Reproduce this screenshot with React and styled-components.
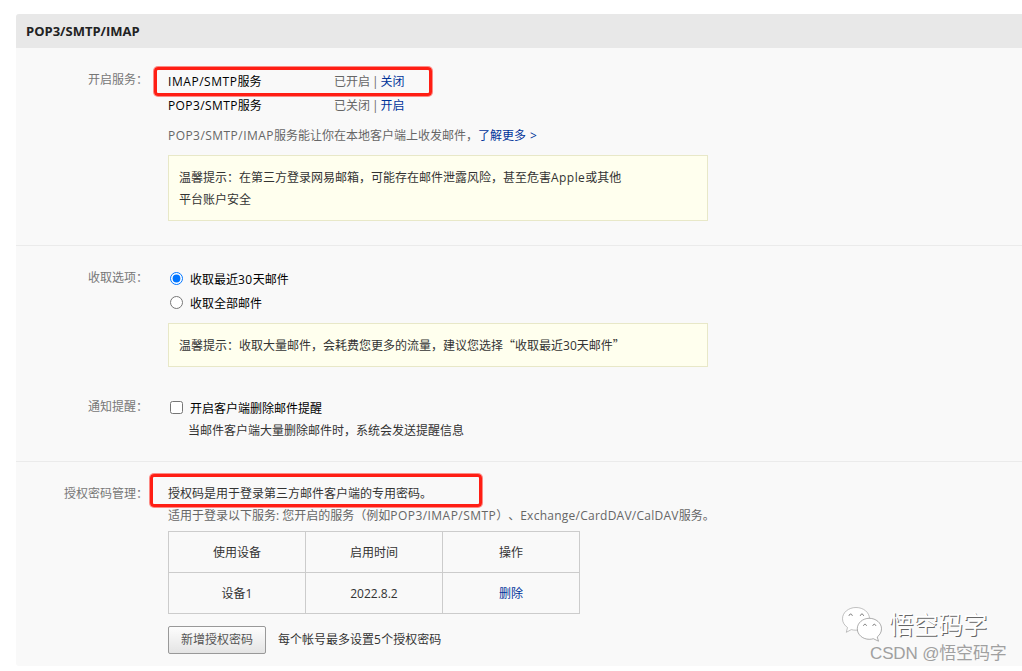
import React, { useState } from "react";
import styled, { createGlobalStyle } from "styled-components";

const GlobalStyle = createGlobalStyle`
  * {
    box-sizing: border-box;
  }
  body {
    margin: 0;
    background: #fff;
    font-family: "Open Sans", "Noto Sans CJK SC", sans-serif;
    font-size: 12px;
    color: #333;
    text-spacing-trim: space-all;
    overflow: hidden;
  }
`;

const Page = styled.div`
  position: relative;
  width: 1022px;
  height: 671px;
  padding: 14px 0 0 16px;
  overflow: hidden;
`;

const Panel = styled.div`
  height: 652px;
  background: #f9f9f9;
  border-radius: 3px 0 0 3px;
  overflow: hidden;
`;

const PanelTitle = styled.h2`
  height: 34px;
  margin: 0;
  padding-left: 10px;
  background: #e8e8e8;
  font-size: 13px;
  font-weight: 700;
  line-height: 35px;
  color: #222;
`;

const Section = styled.section`
  height: ${(p) => p.$height}px;
  padding-top: ${(p) => p.$top}px;
  border-bottom: ${(p) => (p.$last ? "none" : "1px solid #ebebeb")};
`;

const Field = styled.div`
  display: grid;
  grid-template-columns: 132px 1fr;
  column-gap: 20px;
  margin-top: ${(p) => p.$gap || 0}px;
`;

const Label = styled.div`
  text-align: right;
  line-height: ${(p) => p.$line || 22}px;
  color: #777;
`;

const Latin = styled.span`
  letter-spacing: ${(p) => p.$spacing || 0.45}px;
`;

const Cjk = styled.span`
  font-family: "Noto Sans CJK SC", sans-serif;
  line-height: 1;
`;

const ServiceRow = styled.div`
  position: relative;
  display: grid;
  grid-template-columns: 166px 1fr;
  height: 24px;
  line-height: 24px;
  color: #000;
`;

const Status = styled.span`
  color: #666;
  word-spacing: -1.2px;
`;

const Link = styled.a`
  color: #003399;
  cursor: pointer;
`;

const Line = styled.p`
  position: relative;
  margin: 0;
  padding-left: ${(p) => p.$indent || 0}px;
  line-height: 22px;
  color: ${(p) => p.$color || "#333"};
  white-space: nowrap;
`;

const Intro = styled(Line)`
  margin: 7px 0 8px;
  word-spacing: 1px;
`;

const Tip = styled.div`
  width: 540px;
  margin-top: ${(p) => p.$gap || 0}px;
  padding: 11px 80px 9px 10px;
  border: 1px solid #e8e8c8;
  background: #ffffee;
  line-height: 22px;
  color: #333;
`;

const Option = styled.label`
  display: flex;
  align-items: center;
  height: 24px;
  color: #000;

  input {
    width: 13px;
    height: 13px;
    margin: 0 7px 2px 2px;
  }
`;

const Table = styled.table`
  width: 412px;
  margin-top: 4px;
  border-collapse: collapse;
  table-layout: fixed;
  text-align: center;

  th,
  td {
    height: 41px;
    padding: 0;
    border: 1px solid #ccc;
    font-weight: 400;
  }
`;

const Actions = styled.div`
  display: flex;
  align-items: center;
  gap: 12px;
  margin-top: 12px;
`;

const Button = styled.button`
  width: 98px;
  height: 28px;
  padding: 0 0 2px;
  border: 1px solid #999;
  border-radius: 2px;
  background: linear-gradient(#fdfdfd, #e4e4e4);
  font: inherit;
  color: #555;
`;

const Hint = styled.span`
  padding-bottom: 2px;
`;

// red frame drawn over a line
const Mark = styled.span`
  position: absolute;
  left: ${(p) => p.$x}px;
  top: ${(p) => p.$y}px;
  width: ${(p) => p.$w}px;
  height: ${(p) => p.$h}px;
  border: 3px solid #ff1e14;
  border-radius: 4px;
  box-shadow: 0 0 0 1px rgba(255, 30, 20, 0.5);
  pointer-events: none;
`;

const Watermark = styled.div`
  position: absolute;
  left: 840px;
  top: 605px;
  width: 180px;
`;

const Brand = styled.div`
  display: flex;
  align-items: center;
  gap: 7px;
  height: 38px;
  font-size: 24.6px;
  line-height: 38px;
  color: #fff;
  text-shadow: 1px 1px 0 #666;

  span {
    padding-top: 2px;
  }
`;

const Credit = styled.div`
  padding: 1px 0 0 30px;
  font-family: "Liberation Sans", "Noto Sans CJK SC", sans-serif;
  font-size: 17px;
  line-height: 20px;
  letter-spacing: -0.15px;
  color: #a0a0a0;
  white-space: nowrap;
`;

const WechatIcon = () => (
  <svg width="42" height="38" viewBox="0 0 42 38" fill="#fff" stroke="#999" strokeWidth="0.6">
    <path d="M16 2.500C8.500 2.500 2.500 7.500 2.500 13.800c0 3.600 2 6.600 5 8.700L6.300 27.300l5-2.700c1.500.4 3 .6 4.700.6 7.500 0 13.500-5 13.500-11.400S23.500 2.500 16 2.500z" />
    <path stroke="#777" d="M29.300 13.300c-6.700 0-12 4.700-12 10.500s5.300 10.500 12 10.500c1.400 0 2.800-.2 4-.6l5.200 2.500-1.300-4.200c2.600-2 4.300-4.900 4.300-8.200 0-5.800-5.500-10.500-12.200-10.500z" />
    <path
      fill="none"
      stroke="#666"
      strokeWidth="0.9"
      d="M9 10.800c.3-2.300 3-2.300 3.300 0M20.300 10.800c.3-2.300 3-2.300 3.300 0M23.500 20.800c.3-2 2.700-2 3 0M32.800 20.800c.3-2 2.700-2 3 0"
    />
  </svg>
);

const services = [
  { name: "IMAP/SMTP", spacing: 0.55, status: "已开启", action: "关闭", marked: true },
  { name: "POP3/SMTP", spacing: 0.4, status: "已关闭", action: "开启" },
];

const devices = [{ name: "设备1", date: "2022.8.2" }];

const App = () => {
  const [range, setRange] = useState("recent");
  const [notify, setNotify] = useState(false);

  return (
    <Page>
      <GlobalStyle />
      <Panel>
        <PanelTitle>POP3/SMTP/IMAP</PanelTitle>

        <Section $height={198} $top={22}>
          <Field>
            <Label $line={20}>开启服务：</Label>
            <div>
              {services.map((service) => (
                <ServiceRow key={service.name}>
                  <span><Latin $spacing={service.spacing}>{service.name}</Latin>服务</span>
                  <Status>
                    {service.status} | <Link>{service.action}</Link>
                  </Status>
                  {service.marked && <Mark $x={-14} $y={-3} $w={278} $h={29} />}
                </ServiceRow>
              ))}
              <Intro $color="#666">
                <Latin>POP3/SMTP/IMAP</Latin>服务能让你在本地客户端上收发邮件，<Link>了解更多 &gt;</Link>
              </Intro>
              <Tip>
                温馨提示：在第三方登录网易邮箱，可能存在邮件泄露风险，甚至危害<Latin>Apple</Latin>或其他
                <br />
                平台账户安全
              </Tip>
            </div>
          </Field>
        </Section>

        <Section $height={216} $top={21}>
          <Field>
            <Label>收取选项：</Label>
            <div>
              <Option>
                <input type="radio" name="range" checked={range === "recent"} onChange={() => setRange("recent")} />
                <span>收取最近<Latin>30</Latin>天邮件</span>
              </Option>
              <Option>
                <input type="radio" name="range" checked={range === "all"} onChange={() => setRange("all")} />
                收取全部邮件
              </Option>
              <Tip $gap={8}>
                温馨提示：收取大量邮件，会耗费您更多的流量，建议您选择<Cjk>“</Cjk>收取最近30天邮件<Cjk>”</Cjk>
              </Tip>
            </div>
          </Field>
          <Field $gap={29}>
            <Label>通知提醒：</Label>
            <div>
              <Option>
                <input type="checkbox" checked={notify} onChange={() => setNotify(!notify)} />
                开启客户端删除邮件提醒
              </Option>
              <Line $indent={20}>当邮件客户端大量删除邮件时，系统会发送提醒信息</Line>
            </div>
          </Field>
        </Section>

        <Section $height={204} $top={21} $last>
          <Field>
            <Label>授权密码管理：</Label>
            <div>
              <Line>
                授权码是用于登录第三方邮件客户端的专用密码。
                <Mark $x={-18} $y={-9} $w={332} $h={33} />
              </Line>
              <Line $color="#666">
                适用于登录以下服务: 您开启的服务（例如<Latin>POP3/IMAP/SMTP</Latin>）、<Latin $spacing={0.25}>Exchange/CardDAV/CalDAV</Latin>服务。
              </Line>
              <Table>
                <thead>
                  <tr>
                    <th>使用设备</th>
                    <th>启用时间</th>
                    <th>操作</th>
                  </tr>
                </thead>
                <tbody>
                  {devices.map((device) => (
                    <tr key={device.name}>
                      <td>{device.name}</td>
                      <td>{device.date}</td>
                      <td><Link>删除</Link></td>
                    </tr>
                  ))}
                </tbody>
              </Table>
              <Actions>
                <Button>新增授权密码</Button>
                <Hint>每个帐号最多设置<Latin>5</Latin>个授权密码</Hint>
              </Actions>
            </div>
          </Field>
        </Section>
      </Panel>

      <Watermark>
        <Brand>
          <WechatIcon />
          <span>悟空码字</span>
        </Brand>
        <Credit>CSDN @悟空码字</Credit>
      </Watermark>
    </Page>
  );
};

export default App;
